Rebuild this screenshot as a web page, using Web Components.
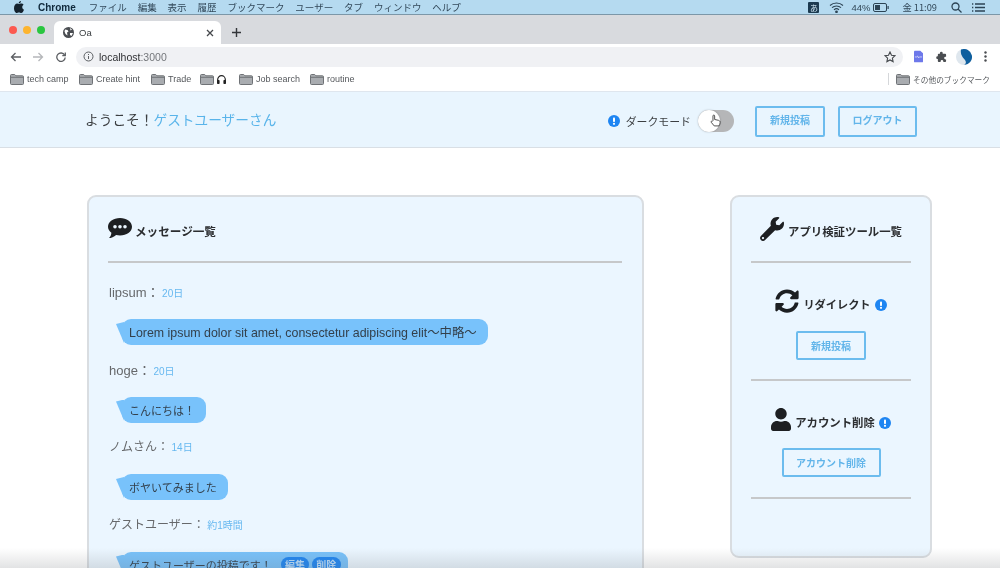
<!DOCTYPE html>
<html lang="ja">
<head>
<meta charset="utf-8">
<title>Oa</title>
<style>
  html, body { margin: 0; height: 568px; overflow: hidden; background: #fff; }
  body { font-family: "Liberation Sans", "Noto Sans CJK JP", sans-serif; position: relative; filter: blur(.45px); }
  .fade {
    position: absolute; left: 0; right: 0; bottom: 0; height: 20px;
    background: linear-gradient(to bottom, rgba(110,115,120,0), rgba(110,115,120,.2));
    pointer-events: none;
  }
</style>
</head>
<body>
<mac-menubar></mac-menubar>
<browser-tabs></browser-tabs>
<browser-toolbar></browser-toolbar>
<bookmark-bar></bookmark-bar>
<site-header></site-header>
<app-main>
  <message-panel>
    <chat-message name="lipsum：" time="20日" style="--name-size:13px;--text-size:12.4px">Lorem ipsum dolor sit amet, consectetur adipiscing elit〜中略〜</chat-message>
    <chat-message name="hoge：" time="20日" style="--name-size:13px">こんにちは！</chat-message>
    <chat-message name="ノムさん：" time="14日">ボヤいてみました</chat-message>
    <chat-message name="ゲストユーザー：" time="約1時間" own>ゲストユーザーの投稿です！</chat-message>
  </message-panel>
  <tool-panel></tool-panel>
</app-main>
<div class="fade"></div>

<script>
const JP = `"Noto Sans CJK JP", sans-serif`;
const ICONS = {
  folder: `<svg width="14" height="11" viewBox="0 0 14 11"><path d="M.5 1.500A1 1 0 0 1 1.500.5h3.200l1.200 1.300h6.600a1 1 0 0 1 1 1v6.700a1 1 0 0 1-1 1h-11a1 1 0 0 1-1-1z" fill="#a9acb0" stroke="#6f7276"/><path d="M1 3.300h12" stroke="#6f7276"/></svg>`,
  info: `<svg width="12" height="12" viewBox="0 0 12 12"><circle cx="6" cy="6" r="6" fill="#1e85f2"/><rect x="5" y="2.500" width="2" height="4.600" rx=".8" fill="#fff"/><circle cx="6" cy="8.800" r="1.100" fill="#fff"/></svg>`
};

class MacMenubar extends HTMLElement {
  constructor() { super(); this.attachShadow({ mode: "open" }); }
  connectedCallback() {
    const items = ["ファイル", "編集", "表示", "履歴", "ブックマーク", "ユーザー", "タブ", "ウィンドウ", "ヘルプ"];
    this.shadowRoot.innerHTML = `
      <style>
        :host { display: flex; align-items: center; height: 14px; background: #b5daf0; border-bottom: 1px solid #7c97a8; color: #33495a; font: 9.500px ${JP}; padding: 0 15px 0 14px; overflow: hidden; }
        .apple { width: 10px; margin-right: 14px; display: flex; }
        b { font: bold 10px "Liberation Sans", sans-serif; color: #10293c; margin-right: 13px; }
        span.m { margin-right: 10.900px; white-space: nowrap; }
        .right { margin-left: auto; display: flex; align-items: center; }
        .ime { width: 11px; height: 11px; background: #1c3a50; color: #cfe4f2; font-size: 8px; line-height: 11px; text-align: center; border-radius: 1px; margin-right: 10px; }
      </style>
      <span class="apple"><svg width="10" height="12" viewBox="0 0 10 12"><path d="M7 0c0 1.300-1 2.500-2.300 2.500C4.600 1.200 5.800.1 7 0zM4.900 3c.7 0 1.300-.5 2.400-.5.900 0 1.800.5 2.300 1.300-2 1.200-1.700 4 .4 4.900-.5 1.300-1.500 3.300-2.800 3.300-.9 0-1.100-.6-2.300-.6s-1.500.6-2.300.6C1.300 12 0 9.400 0 7.200 0 4.600 1.600 2.600 3.300 2.600c.7 0 1.100.4 1.600.4z" fill="#14222e"/></svg></span>
      <b>Chrome</b>
      ${items.map(i => `<span class="m">${i}</span>`).join("")}
      <span class="right">
        <span class="ime">あ</span>
        <svg width="15" height="11" viewBox="0 0 15 11" fill="none" stroke="#2c4354" stroke-width="1.100" style="margin-right:7px"><path d="M1 3.500a9.500 9.500 0 0 1 13 0M3 5.700a6.600 6.600 0 0 1 9 0M5 7.900a3.600 3.600 0 0 1 5 0"/><circle cx="7.500" cy="9.800" r=".8" fill="#2c4354"/></svg>
        <span style="margin-right:3px;font:9.500px 'Liberation Sans',sans-serif">44%</span>
        <svg width="16" height="9" viewBox="0 0 16 9" style="margin-right:13px"><rect x=".5" y=".5" width="13" height="8" rx="1.500" fill="none" stroke="#2c4354"/><rect x="2" y="2" width="5" height="5" fill="#2c4354"/><rect x="14.500" y="3" width="1.200" height="3" fill="#2c4354"/></svg>
        <span style="margin-right:14px;font-size:9.300px">金 11:09</span>
        <svg width="11" height="11" viewBox="0 0 11 11" fill="none" stroke="#2c4354" stroke-width="1.300" style="margin-right:10px"><circle cx="4.500" cy="4.500" r="3.500"/><path d="M7 7l3.500 3.500"/></svg>
        <svg width="13" height="9" viewBox="0 0 13 9" stroke="#2c4354" stroke-width="1.300"><path d="M3 1h10M3 4.500h10M3 8h10M0 1h1.300M0 4.500h1.300M0 8h1.300"/></svg>
      </span>`;
  }
}

class BrowserTabs extends HTMLElement {
  constructor() { super(); this.attachShadow({ mode: "open" }); }
  connectedCallback() {
    this.shadowRoot.innerHTML = `
      <style>
        :host { display: flex; height: 29px; background: #d8dade; padding-left: 9px; box-sizing: border-box; align-items: flex-end; }
        .lights { display: flex; gap: 6px; align-self: flex-start; margin-top: 11px; margin-right: 9px; }
        .lights i { width: 8px; height: 8px; border-radius: 50%; display: block; }
        .tab { width: 167px; height: 23px; background: #fff; border-radius: 6px 6px 0 0; display: flex; align-items: center; padding: 0 7px 0 9px; box-sizing: border-box; color: #3c4043; font: 9.500px "Liberation Sans", sans-serif; }
        .tab span { margin-left: 5px; flex: 1; }
        .plus { margin-left: 10px; align-self: center; margin-top: 5px; display: flex; }
      </style>
      <div class="lights"><i style="background:#fc5a50"></i><i style="background:#fdb42e"></i><i style="background:#2ac640"></i></div>
      <div class="tab">
        <svg width="11" height="11" viewBox="0 0 11 11"><circle cx="5.500" cy="5.500" r="5.500" fill="#4a4d51"/><path d="M2 2.500l2.500.5 1 1.500-1.500 1 .5 3-2-1.500-1-2.500zM7 1l2 1.500-1.500 1zM7 6h3l-1.500 3L7 8z" fill="#fff"/></svg>
        <span>Oa</span>
        <svg width="8" height="8" viewBox="0 0 8 8" stroke="#45484c" stroke-width="1.300"><path d="M1 1l6 6M7 1L1 7"/></svg>
      </div>
      <span class="plus"><svg width="11" height="11" viewBox="0 0 11 11" stroke="#33363a" stroke-width="1.400"><path d="M5.500 1v9M1 5.500h9"/></svg></span>`;
  }
}

class BrowserToolbar extends HTMLElement {
  constructor() { super(); this.attachShadow({ mode: "open" }); }
  connectedCallback() {
    this.shadowRoot.innerHTML = `
      <style>
        :host { display: flex; align-items: center; height: 25px; background: #fff; padding: 0 13px 0 10px; box-sizing: border-box; }
        .nav { display: flex; align-items: center; gap: 12px; margin-right: 10px; }
        .url { flex: 1; height: 20px; border-radius: 10px; background: #f0f1f4; display: flex; align-items: center; padding: 0 7px 0 7px; color: #303134; font: 10.500px "Liberation Sans", sans-serif; }
        .url em { font-style: normal; color: #74777b; }
        .url svg:first-child { margin-right: 5px; }
        .url .star { margin-left: auto; }
        .ext { display: flex; align-items: center; margin-left: 11px; }
      </style>
      <div class="nav">
        <svg width="11" height="10" viewBox="0 0 11 10" fill="none" stroke="#5c5f63" stroke-width="1.300"><path d="M11 5H1.500M5.500 1l-4 4 4 4"/></svg>
        <svg width="11" height="10" viewBox="0 0 11 10" fill="none" stroke="#b5b7ba" stroke-width="1.300"><path d="M0 5h9.500M5.500 1l4 4-4 4"/></svg>
        <svg width="10" height="10" viewBox="0 0 10 10" fill="none" stroke="#5c5f63" stroke-width="1.300"><path d="M8.600 3A4.200 4.200 0 1 0 9.200 5.500"/><path d="M9.300.6v3H6.300" /></svg>
      </div>
      <div class="url">
        <svg width="11" height="11" viewBox="0 0 11 11" fill="none" stroke="#5c5f63"><circle cx="5.500" cy="5.500" r="4.500"/><path d="M5.500 5v3M5.500 3v1"/></svg>
        <span>localhost<em>:3000</em></span>
        <svg class="star" width="12" height="12" viewBox="0 0 12 12" fill="none" stroke="#45484c" stroke-width="1.100"><path d="M6 1l1.500 3.300 3.500.4-2.600 2.400.7 3.500L6 8.900l-3.100 1.700.7-3.500L1 4.700l3.500-.4z"/></svg>
      </div>
      <div class="ext">
        <svg width="9" height="13" viewBox="0 0 10 13" style="margin-right:13px"><path d="M0 1a1 1 0 0 1 1-1h6l3 3v9a1 1 0 0 1-1 1H1a1 1 0 0 1-1-1z" fill="#6d78ea"/><path d="M1 7h2l1-1 1 2 1-1h3" stroke="#fff" stroke-width=".7" fill="none"/></svg>
        <svg width="11" height="11" viewBox="0 0 12 12" style="margin-right:9px"><path d="M4.300 2.300a1.500 1.500 0 0 1 3 0V3H10a1 1 0 0 1 1 1v2.200h-.6a1.500 1.500 0 0 0 0 3h.6V11a1 1 0 0 1-1 1H8v-.6a1.500 1.500 0 0 0-3 0v.6H3a1 1 0 0 1-1-1V8.800h-.3a1.500 1.500 0 0 1 0-3H2V4a1 1 0 0 1 1-1h1.300z" fill="#4a4d51"/></svg>
        <svg width="16" height="16" viewBox="0 0 16 16" style="margin-right:12px"><circle cx="8" cy="8" r="8" fill="#dfe7ee"/><path d="M5 .6A8 8 0 1 1 8 16c2-1 2.500-3 1-5S4 6 5 .6z" fill="#0f5f9e"/></svg>
        <svg width="3" height="11" viewBox="0 0 3 11" fill="#4a4d51"><circle cx="1.500" cy="1.500" r="1.200"/><circle cx="1.500" cy="5.500" r="1.200"/><circle cx="1.500" cy="9.500" r="1.200"/></svg>
      </div>`;
  }
}

class BookmarkBar extends HTMLElement {
  constructor() { super(); this.attachShadow({ mode: "open" }); }
  connectedCallback() {
    this.shadowRoot.innerHTML = `
      <style>
        :host { display: flex; align-items: center; height: 23px; background: #fff; padding: 0 10px 2px 10px; box-sizing: border-box; color: #55585c; font: 9px "Liberation Sans", ${JP}; border-bottom: 1px solid #dfe6ee; }
        .mark { display: flex; align-items: center; gap: 3px; white-space: nowrap; }
        .other { margin-left: auto; display: flex; align-items: center; gap: 3px; border-left: 1px solid #d5d7da; padding-left: 7px; font-family: ${JP}; font-size: 7.700px; height: 12px; }
      </style>
      <span class="mark" style="width:69px">${ICONS.folder}tech camp</span>
      <span class="mark" style="width:72px">${ICONS.folder}Create hint</span>
      <span class="mark" style="width:49px">${ICONS.folder}Trade</span>
      <span class="mark" style="width:39px">${ICONS.folder}<svg width="9" height="9" viewBox="0 0 9 9"><path d="M.7 6V4.500a3.800 3.800 0 0 1 7.600 0V6" fill="none" stroke="#222" stroke-width="1.200"/><rect y="5" width="2.600" height="4" rx=".8" fill="#222"/><rect x="6.400" y="5" width="2.600" height="4" rx=".8" fill="#222"/></svg></span>
      <span class="mark" style="width:71px">${ICONS.folder}Job search</span>
      <span class="mark">${ICONS.folder}routine</span>
      <span class="other">${ICONS.folder}その他のブックマーク</span>`;
  }
}

class OutlineButton extends HTMLElement {
  constructor() { super(); this.attachShadow({ mode: "open" }); }
  connectedCallback() {
    this.shadowRoot.innerHTML = `
      <style>
        :host { display: inline-flex; align-items: center; justify-content: center; box-sizing: border-box; height: 29px; padding-bottom: 1px; border: 2px solid #6cbcee; border-radius: 2px; color: #62b5ea; font: bold 10px ${JP}; white-space: nowrap; }
      </style>
      <slot></slot>`;
  }
}

class InfoDot extends HTMLElement {
  constructor() { super(); this.attachShadow({ mode: "open" }); }
  connectedCallback() {
    this.shadowRoot.innerHTML = `<style>:host { display: inline-flex; }</style>${ICONS.info}`;
  }
}

class SiteHeader extends HTMLElement {
  constructor() { super(); this.attachShadow({ mode: "open" }); }
  connectedCallback() {
    this.shadowRoot.innerHTML = `
      <style>
        :host { display: flex; align-items: center; height: 56px; box-sizing: border-box; background: #e9f5fe; border-bottom: 1px solid #d9dfe5; padding: 0 83px 0 85px; }
        .hello { font: 13.700px ${JP}; color: #3c3f42; margin-top: -2px; }
        .hello span { color: #59b4ea; }
        .right { margin-left: auto; display: flex; align-items: center; padding-top: 3px; }
        .label { font: 10.900px ${JP}; color: #3c3f42; margin: 0 7px 0 6px; }
        .toggle { position: relative; width: 36px; height: 22px; border-radius: 11px; background: #b5b6b8; margin-right: 21px; }
        .toggle i { position: absolute; left: 0; top: 0; width: 22px; height: 22px; border-radius: 50%; background: #fff; box-shadow: 0 0 2px rgba(0,0,0,.25); }
        .toggle svg { position: absolute; left: 12px; top: 4px; }
        outline-button { height: 31px; padding-bottom: 4px; }
        .post { width: 70px; margin-right: 13px; }
        .out { width: 79px; }
      </style>
      <div class="hello">ようこそ！<span>ゲストユーザーさん</span></div>
      <div class="right">
        <info-dot></info-dot>
        <span class="label">ダークモード</span>
        <div class="toggle"><i></i>
          <svg width="11" height="14" viewBox="0 0 13 16"><path d="M3.500 7.500V2a1 1 0 0 1 2 0v4.200l4.500 1c1.300.4 2 1 2 2.300 0 1.500-.5 3-1.300 4.300H5L1.500 9.600c-.6-.9.500-2 1.300-1.300z" fill="#fff" stroke="#333" stroke-width="1"/></svg>
        </div>
        <outline-button class="post">新規投稿</outline-button>
        <outline-button class="out">ログアウト</outline-button>
      </div>`;
  }
}

class AppMain extends HTMLElement {
  constructor() { super(); this.attachShadow({ mode: "open" }); }
  connectedCallback() {
    this.shadowRoot.innerHTML = `
      <style>
        :host { display: flex; align-items: flex-start; gap: 86px; padding: 47px 68px 0 87px; }
      </style>
      <slot></slot>`;
  }
}

class MessagePanel extends HTMLElement {
  constructor() { super(); this.attachShadow({ mode: "open" }); }
  connectedCallback() {
    this.shadowRoot.innerHTML = `
      <style>
        :host { display: block; box-sizing: border-box; width: 557px; height: 420px; flex: none; background: #ebf6ff; border: 2px solid #d9dde1; border-radius: 9px; padding: 21px 20px 0 19px; }
        h2 { display: flex; align-items: flex-start; gap: 3px; margin: 0; height: 43px; font: bold 11.600px ${JP}; color: #2b2d30; border-bottom: 2px solid #c6c8ca; }
        h2 span { margin-top: 5px; line-height: 17px; }
        .list { padding: 19px 0 0 1px; }
      </style>
      <h2>
        <svg width="24" height="21" viewBox="0 0 24 21"><path d="M12 0c6.600 0 12 3.800 12 8.700s-5.400 8.700-12 8.700c-1.400 0-2.700-.2-3.900-.5C6 18.800 3.200 20 1 20c1.400-1.300 2.300-3 2.400-5.300C1.300 13.100 0 11 0 8.700 0 3.800 5.400 0 12 0z" fill="#1d1f22"/><circle cx="7" cy="8.700" r="1.800" fill="#ebf6ff"/><circle cx="12" cy="8.700" r="1.800" fill="#ebf6ff"/><circle cx="17" cy="8.700" r="1.800" fill="#ebf6ff"/></svg>
        <span>メッセージ一覧</span>
      </h2>
      <div class="list"><slot></slot></div>`;
  }
}

class ChatMessage extends HTMLElement {
  constructor() { super(); this.attachShadow({ mode: "open" }); }
  connectedCallback() {
    const own = this.hasAttribute("own");
    this.shadowRoot.innerHTML = `
      <style>
        :host { display: block; height: 77.500px; }
        .who { display: flex; align-items: baseline; height: 20px; font: var(--name-size, 12px) "Liberation Sans", ${JP}; color: #66686b; }
        .who span { margin-left: 2.500px; font: 10px "Liberation Sans", ${JP}; color: #66b8f0; }
        .line { margin: 17px 0 0 13px; display: flex; }
        .bubble { position: relative; display: flex; align-items: center; height: 26px; padding: 0 11px 0 7px; border-radius: 9px; background: #78c2fb; color: #33404c; font: var(--text-size, 11px) "Liberation Sans", ${JP}; white-space: nowrap; }
        .bubble::before { content: ""; position: absolute; left: -6px; top: 3px; width: 8px; height: 21px; background: #78c2fb; clip-path: polygon(0 10%, 100% 0, 100% 100%); }
        .tag { height: 15px; padding: 0 4.200px; border-radius: 8px; background: #1e85f2; color: #b9dcfa; font: bold 10px/15px ${JP}; margin-left: 3px; }
        .tag:first-of-type { margin-left: 9px; }
        .own-pad { padding-right: 7px; }
      </style>
      <div class="who">${this.getAttribute("name")}<span>${this.getAttribute("time")}</span></div>
      <div class="line"><div class="bubble ${own ? "own-pad" : ""}"><slot></slot>${own ? `<span class="tag">編集</span><span class="tag">削除</span>` : ""}</div></div>`;
  }
}

class ToolPanel extends HTMLElement {
  constructor() { super(); this.attachShadow({ mode: "open" }); }
  connectedCallback() {
    this.shadowRoot.innerHTML = `
      <style>
        :host { display: block; box-sizing: border-box; width: 202px; height: 363px; flex: none; background: #ebf6ff; border: 2px solid #d9dde1; border-radius: 9px; padding: 0 19px; }
        h2, h3 { margin: 0; display: flex; align-items: center; justify-content: center; color: #2b2d30; font: bold 11.400px ${JP}; }
        .head { height: 61px; padding-top: 3px; border-bottom: 2px solid #c6c8ca; }
        .head svg { margin-right: 4px; margin-top: -4px; }
        .tool { display: flex; flex-direction: column; align-items: center; border-bottom: 2px solid #c6c8ca; box-sizing: border-box; padding-top: 28px; }
        h3 svg { margin-right: 4px; }
        h3 info-dot { margin-left: 4px; margin-top: 1px; }
        .a { height: 118px; }
        .a h3 { height: 26px; margin-bottom: 14px; font-size: 11.200px; }
        .a h3 svg { margin-top: -7px; }
        .b { height: 118px; }
        .b h3 { height: 26px; margin-bottom: 13px; }
        .b h3 svg { margin-top: -6px; }
      </style>
      <h2 class="head">
        <svg width="24" height="24" viewBox="0 0 512 512"><path fill="#1d1f22" d="M507.700 109.100c-2.200-9-13.500-12.100-20.100-5.500l-74.400 74.400-67.900-11.300-11.300-67.900 74.400-74.400c6.600-6.600 3.400-17.900-5.700-20.200-47.400-11.700-99.600.9-136.600 37.900-39.600 39.600-50.900 97.100-34.100 147.200L18.700 402.800c-25 25-25 65.500 0 90.500s65.500 25 90.500 0l213.200-213.200c50.100 16.700 107.500 5.200 147.100-34.400 37.100-37.100 49.700-89.300 38.200-136.600zM64 472c-13.200 0-24-10.700-24-24 0-13.300 10.700-24 24-24s24 10.700 24 24c0 13.300-10.700 24-24 24z"/></svg>
        アプリ検証ツール一覧
      </h2>
      <div class="tool a">
        <h3>
          <svg width="24" height="24" viewBox="0 0 512 512"><path fill="#1d1f22" d="M370.700 133.300C339.500 104 298.900 88 255.800 88c-77.500.1-144.300 53.200-162.800 126.900-1.300 5.400-6.100 9.100-11.700 9.100H24.100c-7.500 0-13.200-6.800-11.800-14.200C33.900 94.900 134.800 8 256 8c66.500 0 126.800 26.100 171.300 68.700L463 41c15.100-15.100 41-4.400 41 17v134c0 13.300-10.700 24-24 24H346c-21.400 0-32.100-25.900-17-41zM32 296h134c21.400 0 32.100 25.900 17 41l-41.700 41.700c31.200 29.300 71.800 45.300 114.900 45.300 77.400-.1 144.300-53.100 162.800-126.800 1.300-5.400 6.100-9.100 11.700-9.100h57.300c7.500 0 13.200 6.800 11.800 14.200C478.100 417.100 377.200 504 256 504c-66.500 0-126.800-26.100-171.300-68.700L49 471c-15.100 15.100-41 4.400-41-17V320c0-13.300 10.700-24 24-24z"/></svg>
          リダイレクト<info-dot></info-dot>
        </h3>
        <outline-button style="width:70px">新規投稿</outline-button>
      </div>
      <div class="tool b">
        <h3>
          <svg width="20" height="23" viewBox="0 0 448 512"><path fill="#1d1f22" d="M224 256c70.700 0 128-57.300 128-128S294.700 0 224 0 96 57.300 96 128s57.300 128 128 128zm89.600 32h-16.700c-22.200 10.200-46.900 16-72.900 16s-50.600-5.800-72.900-16h-16.700C60.200 288 0 348.200 0 422.400V464c0 26.500 21.500 48 48 48h352c26.500 0 48-21.500 48-48v-41.600c0-74.200-60.200-134.400-134.400-134.400z"/></svg>
          アカウント削除<info-dot></info-dot>
        </h3>
        <outline-button style="width:99px">アカウント削除</outline-button>
      </div>`;
  }
}

customElements.define("mac-menubar", MacMenubar);
customElements.define("browser-tabs", BrowserTabs);
customElements.define("browser-toolbar", BrowserToolbar);
customElements.define("bookmark-bar", BookmarkBar);
customElements.define("outline-button", OutlineButton);
customElements.define("info-dot", InfoDot);
customElements.define("site-header", SiteHeader);
customElements.define("app-main", AppMain);
customElements.define("message-panel", MessagePanel);
customElements.define("chat-message", ChatMessage);
customElements.define("tool-panel", ToolPanel);
</script>
</body>
</html>
